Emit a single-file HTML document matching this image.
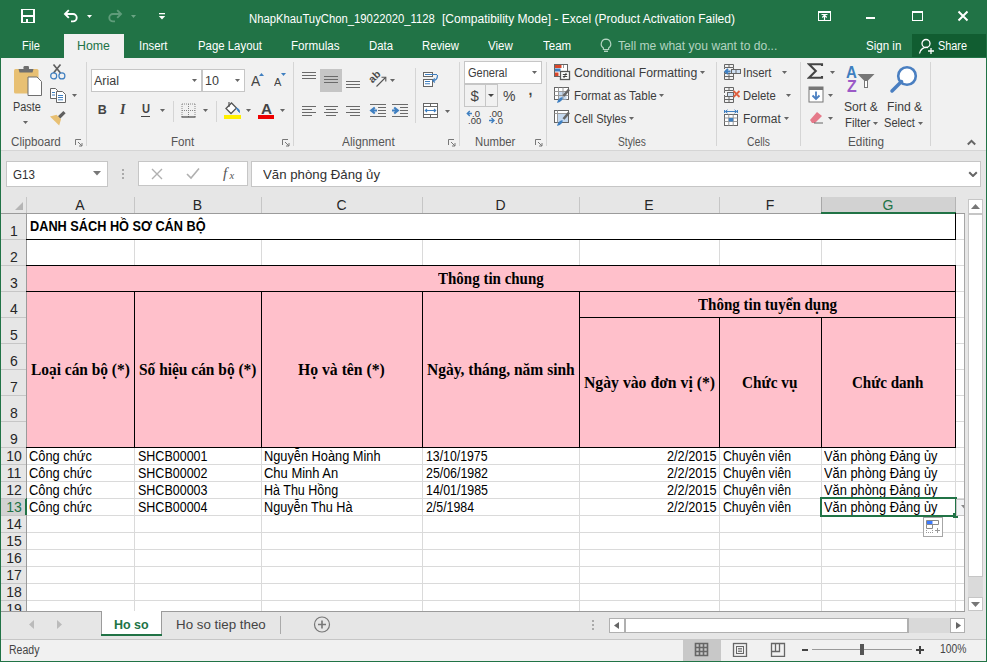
<!DOCTYPE html><html><head><meta charset="utf-8"><style>
html,body{margin:0;padding:0;width:987px;height:662px;overflow:hidden;background:#e6e6e6;font-family:"Liberation Sans",sans-serif}
</style></head><body>
<div style="position:absolute;left:0px;top:0px;width:987px;height:58px;background:#217346"></div>
<div style="position:absolute;left:0px;top:58px;width:987px;height:604px;background:#e6e6e6"></div>
<div style="position:absolute;left:0px;top:58px;width:987px;height:92px;background:#f1f1f1"></div>
<div style="position:absolute;left:0px;top:150px;width:987px;height:1px;background:#d5d5d5"></div>
<div style="position:absolute;left:0px;top:58px;width:1px;height:604px;background:#217346"></div>
<div style="position:absolute;left:986px;top:58px;width:1px;height:604px;background:#217346"></div>
<div style="position:absolute;left:0px;top:661px;width:987px;height:1px;background:#217346"></div>
<div style="position:absolute;left:64px;top:34px;width:60px;height:24px;background:#f1f1f1"></div>
<div style="position:absolute;left:248.90px;top:12.52px;font-size:12.5px;line-height:12.5px;color:#ffffff;font-weight:normal;font-family:'Liberation Sans', sans-serif;white-space:nowrap;transform:scaleX(0.9035);transform-origin:0 0;">NhapKhauTuyChon_19022020_1128</div>
<div style="position:absolute;left:442.00px;top:12.52px;font-size:12.5px;line-height:12.5px;color:#ffffff;font-weight:normal;font-family:'Liberation Sans', sans-serif;white-space:nowrap;transform:scaleX(0.9628);transform-origin:0 0;">[Compatibility Mode] - Excel (Product Activation Failed)</div>
<div style="position:absolute;left:21px;top:9px;width:14px;height:14px;background:#fff"></div>
<div style="position:absolute;left:23px;top:10px;width:10px;height:5px;background:#217346"></div>
<div style="position:absolute;left:23px;top:17px;width:10px;height:5px;background:#217346"></div>
<div style="position:absolute;left:26px;top:19px;width:2px;height:3px;background:#fff"></div>
<svg style="position:absolute;left:62px;top:8px" width="18" height="16" viewBox="0 0 18 16"><path d="M3.5 6 H11 A3.7 3.7 0 0 1 11 13.4 H9" fill="none" stroke="#fff" stroke-width="1.9"/><path d="M6.8 2.2 L3 6 L6.8 9.8" fill="none" stroke="#fff" stroke-width="1.9"/></svg>
<svg style="position:absolute;left:87.2px;top:14.5px" width="5" height="3"><polygon points="0,0 5,0 2.5,3" fill="#fff"/></svg>
<svg style="position:absolute;left:106px;top:8px" width="18" height="16" viewBox="0 0 18 16"><path d="M14.5 6 H7 A3.7 3.7 0 0 0 7 13.4 H9" fill="none" stroke="#5f9c7a" stroke-width="1.9"/><path d="M11.2 2.2 L15 6 L11.2 9.8" fill="none" stroke="#5f9c7a" stroke-width="1.9"/></svg>
<svg style="position:absolute;left:131.0px;top:14.5px" width="5" height="3"><polygon points="0,0 5,0 2.5,3" fill="#6aa584"/></svg>
<svg style="position:absolute;left:158px;top:12px" width="8" height="8" viewBox="0 0 8 8"><rect x="1" y="1" width="6" height="1.3" fill="#fff"/><polygon points="0.8,4 7.2,4 4,7.5" fill="#fff"/></svg>
<div style="position:absolute;left:818px;top:11px;width:13px;height:10px;border:1px solid #fff;border-top-width:2px;box-sizing:border-box"></div>
<svg style="position:absolute;left:818px;top:11px" width="13" height="10" viewBox="0 0 13 10"><path d="M6.5 9 V4.5 M4.3 6.5 L6.5 4.2 L8.7 6.5" fill="none" stroke="#fff" stroke-width="1.2"/><path d="M3.5 3.5 H9.5" stroke="#fff"/></svg>
<div style="position:absolute;left:866px;top:17px;width:9px;height:2px;background:#fff"></div>
<div style="position:absolute;left:912px;top:11px;width:11px;height:10px;border:1px solid #fff;border-top-width:2px;box-sizing:border-box"></div>
<svg style="position:absolute;left:957px;top:10px" width="12" height="12" viewBox="0 0 12 12"><path d="M1.5 1.5 L10.5 10.5 M10.5 1.5 L1.5 10.5" stroke="#fff" stroke-width="2"/></svg>
<div style="position:absolute;left:21.50px;top:39.72px;font-size:12.5px;line-height:12.5px;color:#ffffff;font-weight:normal;font-family:'Liberation Sans', sans-serif;white-space:nowrap;transform:scaleX(0.8845);transform-origin:0 0;">File</div>
<div style="position:absolute;left:77.20px;top:39.72px;font-size:12.5px;line-height:12.5px;color:#217346;font-weight:normal;font-family:'Liberation Sans', sans-serif;white-space:nowrap;transform:scaleX(0.9858);transform-origin:0 0;">Home</div>
<div style="position:absolute;left:139.20px;top:39.72px;font-size:12.5px;line-height:12.5px;color:#ffffff;font-weight:normal;font-family:'Liberation Sans', sans-serif;white-space:nowrap;transform:scaleX(0.9088);transform-origin:0 0;">Insert</div>
<div style="position:absolute;left:197.50px;top:39.72px;font-size:12.5px;line-height:12.5px;color:#ffffff;font-weight:normal;font-family:'Liberation Sans', sans-serif;white-space:nowrap;transform:scaleX(0.9118);transform-origin:0 0;">Page Layout</div>
<div style="position:absolute;left:291.00px;top:39.72px;font-size:12.5px;line-height:12.5px;color:#ffffff;font-weight:normal;font-family:'Liberation Sans', sans-serif;white-space:nowrap;transform:scaleX(0.9324);transform-origin:0 0;">Formulas</div>
<div style="position:absolute;left:369.00px;top:39.72px;font-size:12.5px;line-height:12.5px;color:#ffffff;font-weight:normal;font-family:'Liberation Sans', sans-serif;white-space:nowrap;transform:scaleX(0.9078);transform-origin:0 0;">Data</div>
<div style="position:absolute;left:422.00px;top:39.72px;font-size:12.5px;line-height:12.5px;color:#ffffff;font-weight:normal;font-family:'Liberation Sans', sans-serif;white-space:nowrap;transform:scaleX(0.9024);transform-origin:0 0;">Review</div>
<div style="position:absolute;left:487.70px;top:39.72px;font-size:12.5px;line-height:12.5px;color:#ffffff;font-weight:normal;font-family:'Liberation Sans', sans-serif;white-space:nowrap;transform:scaleX(0.9191);transform-origin:0 0;">View</div>
<div style="position:absolute;left:542.70px;top:39.72px;font-size:12.5px;line-height:12.5px;color:#ffffff;font-weight:normal;font-family:'Liberation Sans', sans-serif;white-space:nowrap;transform:scaleX(0.9227);transform-origin:0 0;">Team</div>
<svg style="position:absolute;left:599px;top:38px" width="14" height="15" viewBox="0 0 14 15"><path d="M7 1.2 A4.8 4.8 0 0 1 9.6 10 V11.5 H4.4 V10 A4.8 4.8 0 0 1 7 1.2 Z" fill="none" stroke="#b3d4c1" stroke-width="1.2"/><path d="M5 13.3 H9" stroke="#b3d4c1" stroke-width="1.4"/></svg>
<div style="position:absolute;left:617.60px;top:39.72px;font-size:12.5px;line-height:12.5px;color:#b3d4c1;font-weight:normal;font-family:'Liberation Sans', sans-serif;white-space:nowrap;transform:scaleX(0.9673);transform-origin:0 0;">Tell me what you want to do...</div>
<div style="position:absolute;left:866.00px;top:40.22px;font-size:12.5px;line-height:12.5px;color:#ffffff;font-weight:normal;font-family:'Liberation Sans', sans-serif;white-space:nowrap;transform:scaleX(0.9255);transform-origin:0 0;">Sign in</div>
<div style="position:absolute;left:912px;top:34px;width:74px;height:23px;background:#115d31"></div>
<svg style="position:absolute;left:918px;top:38px" width="18" height="17" viewBox="0 0 18 17"><circle cx="8" cy="5.5" r="4" fill="none" stroke="#fff" stroke-width="1.3"/><path d="M1.5 15.5 A7 7 0 0 1 10 9.5" fill="none" stroke="#fff" stroke-width="1.3"/><path d="M13 10 V16 M10 13 H16" stroke="#fff" stroke-width="1.3"/></svg>
<div style="position:absolute;left:938.00px;top:40.22px;font-size:12.5px;line-height:12.5px;color:#ffffff;font-weight:normal;font-family:'Liberation Sans', sans-serif;white-space:nowrap;transform:scaleX(0.8689);transform-origin:0 0;">Share</div>
<div style="position:absolute;left:86px;top:62px;width:1px;height:84px;background:#d5d5d5"></div>
<div style="position:absolute;left:293px;top:62px;width:1px;height:84px;background:#d5d5d5"></div>
<div style="position:absolute;left:459px;top:62px;width:1px;height:84px;background:#d5d5d5"></div>
<div style="position:absolute;left:546px;top:62px;width:1px;height:84px;background:#d5d5d5"></div>
<div style="position:absolute;left:716px;top:62px;width:1px;height:84px;background:#d5d5d5"></div>
<div style="position:absolute;left:800px;top:62px;width:1px;height:84px;background:#d5d5d5"></div>
<div style="position:absolute;left:930px;top:62px;width:1px;height:84px;background:#d5d5d5"></div>
<div style="position:absolute;left:173px;top:101px;width:1px;height:21px;background:#d5d5d5"></div>
<div style="position:absolute;left:216px;top:101px;width:1px;height:21px;background:#d5d5d5"></div>
<div style="position:absolute;left:415px;top:68px;width:1px;height:55px;background:#d5d5d5"></div>
<div style="position:absolute;left:10.70px;top:135.74px;font-size:12px;line-height:12px;color:#555;font-weight:normal;font-family:'Liberation Sans', sans-serif;white-space:nowrap;transform:scaleX(0.9677);transform-origin:0 0;">Clipboard</div>
<div style="position:absolute;left:170.70px;top:135.74px;font-size:12px;line-height:12px;color:#555;font-weight:normal;font-family:'Liberation Sans', sans-serif;white-space:nowrap;transform:scaleX(0.9667);transform-origin:0 0;">Font</div>
<div style="position:absolute;left:342.00px;top:135.74px;font-size:12px;line-height:12px;color:#555;font-weight:normal;font-family:'Liberation Sans', sans-serif;white-space:nowrap;transform:scaleX(0.9880);transform-origin:0 0;">Alignment</div>
<div style="position:absolute;left:474.70px;top:135.74px;font-size:12px;line-height:12px;color:#555;font-weight:normal;font-family:'Liberation Sans', sans-serif;white-space:nowrap;transform:scaleX(0.9447);transform-origin:0 0;">Number</div>
<div style="position:absolute;left:617.60px;top:135.74px;font-size:12px;line-height:12px;color:#555;font-weight:normal;font-family:'Liberation Sans', sans-serif;white-space:nowrap;transform:scaleX(0.8502);transform-origin:0 0;">Styles</div>
<div style="position:absolute;left:746.60px;top:135.74px;font-size:12px;line-height:12px;color:#555;font-weight:normal;font-family:'Liberation Sans', sans-serif;white-space:nowrap;transform:scaleX(0.8614);transform-origin:0 0;">Cells</div>
<div style="position:absolute;left:847.50px;top:135.74px;font-size:12px;line-height:12px;color:#555;font-weight:normal;font-family:'Liberation Sans', sans-serif;white-space:nowrap;transform:scaleX(0.9804);transform-origin:0 0;">Editing</div>
<svg style="position:absolute;left:75px;top:139px" width="8" height="8" viewBox="0 0 8 8"><path d="M0.5 6 V0.5 H6" fill="none" stroke="#777"/><path d="M3 3 L7 7 M7 4 V7 H4" fill="none" stroke="#777"/></svg>
<svg style="position:absolute;left:282px;top:139px" width="8" height="8" viewBox="0 0 8 8"><path d="M0.5 6 V0.5 H6" fill="none" stroke="#777"/><path d="M3 3 L7 7 M7 4 V7 H4" fill="none" stroke="#777"/></svg>
<svg style="position:absolute;left:448px;top:139px" width="8" height="8" viewBox="0 0 8 8"><path d="M0.5 6 V0.5 H6" fill="none" stroke="#777"/><path d="M3 3 L7 7 M7 4 V7 H4" fill="none" stroke="#777"/></svg>
<svg style="position:absolute;left:535px;top:139px" width="8" height="8" viewBox="0 0 8 8"><path d="M0.5 6 V0.5 H6" fill="none" stroke="#777"/><path d="M3 3 L7 7 M7 4 V7 H4" fill="none" stroke="#777"/></svg>
<svg style="position:absolute;left:966px;top:139px" width="11" height="7" viewBox="0 0 11 7"><path d="M1.8 5.5 L5.5 1.8 L9.2 5.5" fill="none" stroke="#666" stroke-width="2"/></svg>
<div style="position:absolute;left:12.50px;top:100.92px;font-size:12.5px;line-height:12.5px;color:#3c3c3c;font-weight:normal;font-family:'Liberation Sans', sans-serif;white-space:nowrap;transform:scaleX(0.8705);transform-origin:0 0;">Paste</div>
<svg style="position:absolute;left:23.0px;top:120.5px" width="5" height="3"><polygon points="0,0 5,0 2.5,3" fill="#666"/></svg>
<svg style="position:absolute;left:13px;top:65px" width="30" height="32" viewBox="0 0 30 32"><rect x="1" y="4" width="24.5" height="24.5" rx="1.5" fill="#e8c073"/><path d="M5.5 4 H20.5 L19.5 7.5 H6.5 Z" fill="#6f6f6f"/><rect x="10.5" y="1" width="5.5" height="4" rx="1.2" fill="#6f6f6f"/><path d="M15 12 H24 L28.5 16.5 V30.5 H15 Z" fill="#fff" stroke="#6f6f6f" stroke-width="1"/></svg>
<svg style="position:absolute;left:48px;top:62px" width="18" height="18" viewBox="0 0 18 18"><path d="M5.5 2.5 L12.5 11 M12.5 2.5 L5.5 11" stroke="#5f5f5f" stroke-width="1.7"/><circle cx="5.7" cy="13.9" r="3" fill="none" stroke="#3f7fc0" stroke-width="1.2"/><circle cx="13.9" cy="13.9" r="3" fill="none" stroke="#3f7fc0" stroke-width="1.2"/></svg>
<svg style="position:absolute;left:49px;top:87px" width="18" height="16" viewBox="0 0 18 16"><path d="M1.5 1.5 H6.5 L8.5 3.5 V11.5 H1.5 Z" fill="#fff" stroke="#666"/><path d="M3 5.5 H6 M3 8 H6" stroke="#3f7fc0"/><path d="M7.5 4.5 H13.5 L16.5 7.5 V15.5 H7.5 Z" fill="#fff" stroke="#666"/><path d="M9 8.5 H14 M9 10.5 H14 M9 12.8 H14" stroke="#3f7fc0"/></svg>
<svg style="position:absolute;left:72.0px;top:94.0px" width="5" height="3"><polygon points="0,0 5,0 2.5,3" fill="#666"/></svg>
<svg style="position:absolute;left:49px;top:110px" width="18" height="16" viewBox="0 0 18 16"><path d="M10 7.5 L15.5 2.2" stroke="#5f5f5f" stroke-width="3.2"/><path d="M1 6.5 L7.5 4.8 L12 9.3 L10.2 15.5 Z" fill="#e8c073"/></svg>
<div style="position:absolute;left:91px;top:69px;width:111px;height:23px;background:#fff;border:1px solid #c6c6c6;box-sizing:border-box"></div>
<div style="position:absolute;left:202px;top:69px;width:43px;height:23px;background:#fff;border:1px solid #c6c6c6;box-sizing:border-box"></div>
<div style="position:absolute;left:94.00px;top:74.62px;font-size:12.5px;line-height:12.5px;color:#3c3c3c;font-weight:normal;font-family:'Liberation Sans', sans-serif;white-space:nowrap;">Arial</div>
<svg style="position:absolute;left:192.0px;top:79.0px" width="5" height="3"><polygon points="0,0 5,0 2.5,3" fill="#666"/></svg>
<div style="position:absolute;left:205.00px;top:74.62px;font-size:12.5px;line-height:12.5px;color:#3c3c3c;font-weight:normal;font-family:'Liberation Sans', sans-serif;white-space:nowrap;">10</div>
<svg style="position:absolute;left:235.0px;top:79.0px" width="5" height="3"><polygon points="0,0 5,0 2.5,3" fill="#666"/></svg>
<div style="position:absolute;left:251.10px;top:74.15px;font-size:14px;line-height:14px;color:#444;font-weight:normal;font-family:'Liberation Sans', sans-serif;white-space:nowrap;transform:scaleX(0.9915);transform-origin:0 0;">A</div>
<svg style="position:absolute;left:259px;top:73px" width="5" height="3" viewBox="0 0 5 3"><polygon points="0,3 2.5,0 5,3" fill="#3f7fc0"/></svg>
<div style="position:absolute;left:274.20px;top:76.69px;font-size:11px;line-height:11px;color:#444;font-weight:normal;font-family:'Liberation Sans', sans-serif;white-space:nowrap;transform:scaleX(1.0041);transform-origin:0 0;">A</div>
<svg style="position:absolute;left:281px;top:73px" width="5" height="3" viewBox="0 0 5 3"><polygon points="0,0 5,0 2.5,3" fill="#3f7fc0"/></svg>
<div style="position:absolute;left:97.70px;top:103.92px;font-size:12.5px;line-height:12.5px;color:#444;font-weight:bold;font-family:'Liberation Sans', sans-serif;white-space:nowrap;">B</div>
<div style="position:absolute;left:120.00px;top:102.78px;font-size:14px;line-height:14px;color:#444;font-weight:bold;font-family:'Liberation Serif', serif;white-space:nowrap;"><i>I</i></div>
<div style="position:absolute;left:141.50px;top:103.42px;font-size:12.5px;line-height:12.5px;color:#444;font-weight:bold;font-family:'Liberation Sans', sans-serif;white-space:nowrap;transform:scaleX(0.8889);transform-origin:0 0;">U</div>
<div style="position:absolute;left:141px;top:116px;width:9px;height:1px;background:#444"></div>
<svg style="position:absolute;left:160.1px;top:109.0px" width="5" height="3"><polygon points="0,0 5,0 2.5,3" fill="#666"/></svg>
<svg style="position:absolute;left:181px;top:103px" width="15" height="15" viewBox="0 0 15 15"><path d="M1 1 H14 M1 7.5 H14 M1 1 V14 M7.5 1 V14 M14 1 V14" stroke="#888" stroke-dasharray="1 1"/><path d="M0.5 14 H14.5" stroke="#444" stroke-width="1.2"/></svg>
<svg style="position:absolute;left:203.1px;top:109.0px" width="5" height="3"><polygon points="0,0 5,0 2.5,3" fill="#666"/></svg>
<svg style="position:absolute;left:223px;top:101px" width="19" height="14" viewBox="0 0 19 14"><path d="M3 7.5 L8.5 2 L13.5 7 L8 12.5 Z" fill="#fff" stroke="#555" stroke-width="1.3"/><path d="M6 1 V6" stroke="#555" stroke-width="1.2"/><path d="M13.5 7 Q17 8 16.5 11.5 Q14.5 10 13.5 7 Z" fill="#3f7fc0" stroke="#3f7fc0" stroke-width="1"/></svg>
<div style="position:absolute;left:224px;top:115px;width:17px;height:4px;background:#ffef00"></div>
<svg style="position:absolute;left:246.3px;top:109.0px" width="5" height="3"><polygon points="0,0 5,0 2.5,3" fill="#666"/></svg>
<div style="position:absolute;left:261.00px;top:102.15px;font-size:14px;line-height:14px;color:#444;font-weight:bold;font-family:'Liberation Sans', sans-serif;white-space:nowrap;transform:scaleX(1.0913);transform-origin:0 0;">A</div>
<div style="position:absolute;left:258px;top:115px;width:16px;height:4px;background:#e00"></div>
<svg style="position:absolute;left:280.3px;top:109.0px" width="5" height="3"><polygon points="0,0 5,0 2.5,3" fill="#666"/></svg>
<div style="position:absolute;left:302px;top:72px;width:14px;height:1px;background:#6a6a6a"></div>
<div style="position:absolute;left:302px;top:75px;width:14px;height:1px;background:#6a6a6a"></div>
<div style="position:absolute;left:302px;top:78px;width:14px;height:1px;background:#6a6a6a"></div>
<div style="position:absolute;left:320px;top:69px;width:22px;height:23px;background:#c5c5c5"></div>
<div style="position:absolute;left:324px;top:76px;width:14px;height:1px;background:#6a6a6a"></div>
<div style="position:absolute;left:324px;top:79px;width:14px;height:1px;background:#6a6a6a"></div>
<div style="position:absolute;left:324px;top:82px;width:14px;height:1px;background:#6a6a6a"></div>
<div style="position:absolute;left:346px;top:81px;width:14px;height:1px;background:#6a6a6a"></div>
<div style="position:absolute;left:346px;top:84px;width:14px;height:1px;background:#6a6a6a"></div>
<div style="position:absolute;left:346px;top:87px;width:14px;height:1px;background:#6a6a6a"></div>
<svg style="position:absolute;left:368px;top:70px" width="20" height="18" viewBox="0 0 20 18"><text x="0" y="0" font-family="Liberation Sans" font-size="10.5" font-weight="bold" fill="#4a4a4a" transform="translate(4.5 13.5) rotate(-45)">ab</text><path d="M8.5 16.5 L17.5 7.5" stroke="#555" stroke-width="1.1"/><path d="M13.5 7.2 H17.8 V11.5" fill="none" stroke="#555" stroke-width="1.1"/></svg>
<svg style="position:absolute;left:389.9px;top:79.0px" width="5" height="3"><polygon points="0,0 5,0 2.5,3" fill="#666"/></svg>
<svg style="position:absolute;left:422px;top:71px" width="18" height="17" viewBox="0 0 18 17"><rect x="1.5" y="1.5" width="9" height="4" fill="#fff" stroke="#666"/><rect x="1.5" y="8.5" width="9" height="7" fill="#fff" stroke="#666"/><path d="M3 3.5 H15 M3 10.5 H8 M3 12.8 H8" stroke="#3f7fc0" stroke-width="1.1"/><path d="M15.5 4 Q15.5 9.5 11 9.5" fill="none" stroke="#3f7fc0" stroke-width="1.2"/><path d="M12.8 7.5 L10.8 9.5 L12.8 11.5" fill="none" stroke="#3f7fc0" stroke-width="1.2"/></svg>
<div style="position:absolute;left:302px;top:106px;width:14px;height:1px;background:#6a6a6a"></div>
<div style="position:absolute;left:302px;top:109px;width:10px;height:1px;background:#6a6a6a"></div>
<div style="position:absolute;left:302px;top:112px;width:14px;height:1px;background:#6a6a6a"></div>
<div style="position:absolute;left:302px;top:115px;width:10px;height:1px;background:#6a6a6a"></div>
<div style="position:absolute;left:324px;top:106px;width:14px;height:1px;background:#6a6a6a"></div>
<div style="position:absolute;left:326px;top:109px;width:10px;height:1px;background:#6a6a6a"></div>
<div style="position:absolute;left:324px;top:112px;width:14px;height:1px;background:#6a6a6a"></div>
<div style="position:absolute;left:326px;top:115px;width:10px;height:1px;background:#6a6a6a"></div>
<div style="position:absolute;left:346px;top:106px;width:14px;height:1px;background:#6a6a6a"></div>
<div style="position:absolute;left:350px;top:109px;width:10px;height:1px;background:#6a6a6a"></div>
<div style="position:absolute;left:346px;top:112px;width:14px;height:1px;background:#6a6a6a"></div>
<div style="position:absolute;left:350px;top:115px;width:10px;height:1px;background:#6a6a6a"></div>
<div style="position:absolute;left:370px;top:104px;width:16px;height:1px;background:#6a6a6a"></div>
<div style="position:absolute;left:370px;top:116px;width:16px;height:1px;background:#6a6a6a"></div>
<div style="position:absolute;left:378px;top:107px;width:8px;height:1px;background:#6a6a6a"></div>
<div style="position:absolute;left:378px;top:110px;width:8px;height:1px;background:#6a6a6a"></div>
<div style="position:absolute;left:378px;top:113px;width:8px;height:1px;background:#6a6a6a"></div>
<div style="position:absolute;left:392px;top:104px;width:16px;height:1px;background:#6a6a6a"></div>
<div style="position:absolute;left:392px;top:116px;width:16px;height:1px;background:#6a6a6a"></div>
<div style="position:absolute;left:400px;top:107px;width:8px;height:1px;background:#6a6a6a"></div>
<div style="position:absolute;left:400px;top:110px;width:8px;height:1px;background:#6a6a6a"></div>
<div style="position:absolute;left:400px;top:113px;width:8px;height:1px;background:#6a6a6a"></div>
<svg style="position:absolute;left:369px;top:102px" width="10" height="16" viewBox="0 0 10 16"><path d="M8 8.5 H3 M5.8 5.5 L2.2 8.5 L5.8 11.5" fill="none" stroke="#3f7fc0" stroke-width="2.2"/></svg>
<svg style="position:absolute;left:391px;top:102px" width="10" height="16" viewBox="0 0 10 16"><path d="M1 8.5 H6 M3.2 5.5 L6.8 8.5 L3.2 11.5" fill="none" stroke="#3f7fc0" stroke-width="2.2"/></svg>
<svg style="position:absolute;left:422px;top:102px" width="17" height="17" viewBox="0 0 17 17"><rect x="1.5" y="1.5" width="14" height="14" fill="#fff" stroke="#666"/><path d="M1.5 4.5 H15.5 M1.5 12.5 H15.5 M8.5 1.5 V4.5 M8.5 12.5 V15.5" stroke="#666"/><path d="M3.5 8.5 H13.5" stroke="#3f7fc0"/><path d="M5 7 L3.3 8.5 L5 10 M12 7 L13.7 8.5 L12 10" fill="none" stroke="#3f7fc0" stroke-width="1.1"/></svg>
<svg style="position:absolute;left:444.9px;top:109.5px" width="5" height="3"><polygon points="0,0 5,0 2.5,3" fill="#666"/></svg>
<div style="position:absolute;left:464px;top:61px;width:78px;height:23px;background:#fff;border:1px solid #c6c6c6;box-sizing:border-box"></div>
<div style="position:absolute;left:467.50px;top:67.22px;font-size:12.5px;line-height:12.5px;color:#3c3c3c;font-weight:normal;font-family:'Liberation Sans', sans-serif;white-space:nowrap;transform:scaleX(0.8809);transform-origin:0 0;">General</div>
<svg style="position:absolute;left:531.9px;top:71.0px" width="5" height="3"><polygon points="0,0 5,0 2.5,3" fill="#666"/></svg>
<div style="position:absolute;left:464px;top:84px;width:34px;height:23px;border:1px solid #c6c6c6;box-sizing:border-box"></div>
<div style="position:absolute;left:485px;top:85px;width:1px;height:21px;background:#c6c6c6"></div>
<div style="position:absolute;left:470.50px;top:87.80px;font-size:15px;line-height:15px;color:#444;font-weight:normal;font-family:'Liberation Sans', sans-serif;white-space:nowrap;">$</div>
<svg style="position:absolute;left:488.4px;top:94.0px" width="6" height="3"><polygon points="0,0 6,0 3.0,3" fill="#444"/></svg>
<div style="position:absolute;left:503.30px;top:88.65px;font-size:14px;line-height:14px;color:#444;font-weight:normal;font-family:'Liberation Sans', sans-serif;white-space:nowrap;transform:scaleX(1.0032);transform-origin:0 0;">%</div>
<div style="position:absolute;left:528.50px;top:83.15px;font-size:14px;line-height:14px;color:#444;font-weight:bold;font-family:'Liberation Sans', sans-serif;white-space:nowrap;">,</div>
<svg style="position:absolute;left:466px;top:109px" width="17" height="17" viewBox="0 0 17 17"><path d="M1.5 4.5 H6 M3.8 2 L1.3 4.5 L3.8 7" fill="none" stroke="#3f7fc0" stroke-width="1.4"/><text x="6" y="8" font-family="Liberation Sans" font-size="9.5" fill="#3a3a3a">.0</text><text x="2" y="15" font-family="Liberation Sans" font-size="9.5" fill="#3a3a3a">.00</text></svg>
<svg style="position:absolute;left:488px;top:109px" width="17" height="17" viewBox="0 0 17 17"><text x="1" y="8" font-family="Liberation Sans" font-size="9.5" fill="#3a3a3a">.00</text><path d="M1 11.5 H6 M3.5 9 L6 11.5 L3.5 14" fill="none" stroke="#3f7fc0" stroke-width="1.4"/><text x="7" y="15" font-family="Liberation Sans" font-size="9.5" fill="#3a3a3a">.0</text></svg>
<svg style="position:absolute;left:553px;top:63px" width="18" height="18" viewBox="0 0 18 18"><rect x="1.5" y="1.5" width="13" height="12" fill="#fff" stroke="#666"/><rect x="2" y="2" width="6.5" height="3" fill="#d9472b"/><rect x="2" y="5.5" width="5.5" height="3" fill="#3f7fc0"/><rect x="2" y="9.5" width="3.5" height="3.5" fill="#d9472b"/><path d="M10.5 2 V5" stroke="#999"/><rect x="7.5" y="8.5" width="9" height="8" fill="#fff" stroke="#555" stroke-width="1.3"/><path d="M9.8 11.5 H14.2 M9.8 13.5 H14.2 M13.2 10 L10.8 15" stroke="#333" stroke-width="0.9"/></svg>
<div style="position:absolute;left:573.50px;top:67.22px;font-size:12.5px;line-height:12.5px;color:#3c3c3c;font-weight:normal;font-family:'Liberation Sans', sans-serif;white-space:nowrap;transform:scaleX(0.9797);transform-origin:0 0;">Conditional Formatting</div>
<svg style="position:absolute;left:699.8px;top:71.1px" width="5" height="3"><polygon points="0,0 5,0 2.5,3" fill="#666"/></svg>
<svg style="position:absolute;left:553px;top:86px" width="18" height="18" viewBox="0 0 18 18"><rect x="1.5" y="1.5" width="14" height="12" fill="#fff" stroke="#666"/><rect x="5.5" y="5.5" width="8" height="8" fill="#c5d9ef"/><path d="M1.5 5.5 H15.5 M1.5 9.5 H15.5 M5.5 1.5 V13.5 M10 1.5 V13.5" stroke="#999"/><path d="M16 3.5 L10.5 10" stroke="#666" stroke-width="2.6"/><path d="M4 17 Q5 12 9.5 11 Q10.5 15 4 17 Z" fill="#3f7fc0"/></svg>
<div style="position:absolute;left:573.50px;top:90.22px;font-size:12.5px;line-height:12.5px;color:#3c3c3c;font-weight:normal;font-family:'Liberation Sans', sans-serif;white-space:nowrap;transform:scaleX(0.9253);transform-origin:0 0;">Format as Table</div>
<svg style="position:absolute;left:658.7px;top:94.3px" width="5" height="3"><polygon points="0,0 5,0 2.5,3" fill="#666"/></svg>
<svg style="position:absolute;left:553px;top:109px" width="18" height="18" viewBox="0 0 18 18"><rect x="1.5" y="1.5" width="14" height="12" fill="#fff" stroke="#666"/><rect x="5" y="5" width="10" height="8" fill="#c5d9ef"/><path d="M1.5 4.5 H15.5 M4.5 1.5 V13.5" stroke="#999"/><path d="M16 3.5 L10.5 10" stroke="#666" stroke-width="2.6"/><path d="M4 17 Q5 12 9.5 11 Q10.5 15 4 17 Z" fill="#3f7fc0"/></svg>
<div style="position:absolute;left:573.50px;top:113.22px;font-size:12.5px;line-height:12.5px;color:#3c3c3c;font-weight:normal;font-family:'Liberation Sans', sans-serif;white-space:nowrap;transform:scaleX(0.8855);transform-origin:0 0;">Cell Styles</div>
<svg style="position:absolute;left:628.6px;top:117.3px" width="5" height="3"><polygon points="0,0 5,0 2.5,3" fill="#666"/></svg>
<svg style="position:absolute;left:723px;top:63px" width="18" height="18" viewBox="0 0 18 18"><path d="M1.5 1.5 H10.5 V4.5 H1.5 Z M6 1.5 V4.5 M1.5 10.5 H10.5 V16.5 H1.5 Z M1.5 13.5 H10.5 M6 10.5 V16.5 M1.5 4.5 V6 M10.5 4.5 V6 M1.5 9 V10.5 M8.5 10.5 V9.5" fill="none" stroke="#666"/><rect x="8.5" y="6.5" width="9" height="4" fill="#cfe0f3" stroke="#666"/><path d="M13 6.5 V10.5" stroke="#666"/><path d="M7.5 8.5 H2.5 M5 5.8 L2.2 8.5 L5 11.2" fill="none" stroke="#3f7fc0" stroke-width="1.8"/></svg>
<div style="position:absolute;left:743.30px;top:67.02px;font-size:12.5px;line-height:12.5px;color:#3c3c3c;font-weight:normal;font-family:'Liberation Sans', sans-serif;white-space:nowrap;transform:scaleX(0.9088);transform-origin:0 0;">Insert</div>
<svg style="position:absolute;left:782.0px;top:71.1px" width="5" height="3"><polygon points="0,0 5,0 2.5,3" fill="#666"/></svg>
<svg style="position:absolute;left:723px;top:86px" width="18" height="18" viewBox="0 0 18 18"><path d="M1.5 1.5 H10.5 V4.5 H1.5 Z M6 1.5 V4.5 M1.5 10.5 H10.5 V16.5 H1.5 Z M1.5 13.5 H10.5 M6 10.5 V16.5 M1.5 4.5 V7 M1.5 9 V10.5" fill="none" stroke="#666"/><rect x="4.5" y="6.5" width="6" height="4" fill="#cfe0f3" stroke="#666"/><path d="M10.5 5 L16.5 11 M16.5 5 L10.5 11" stroke="#e0603f" stroke-width="1.8"/></svg>
<div style="position:absolute;left:743.30px;top:90.42px;font-size:12.5px;line-height:12.5px;color:#3c3c3c;font-weight:normal;font-family:'Liberation Sans', sans-serif;white-space:nowrap;transform:scaleX(0.9052);transform-origin:0 0;">Delete</div>
<svg style="position:absolute;left:785.5px;top:94.1px" width="5" height="3"><polygon points="0,0 5,0 2.5,3" fill="#666"/></svg>
<svg style="position:absolute;left:723px;top:109px" width="17" height="18" viewBox="0 0 17 18"><path d="M1.5 1 V4 M14.5 1 V4 M2.5 2.5 H13.5" stroke="#3f7fc0"/><path d="M4.5 0.8 L2.2 2.5 L4.5 4.2 M11.5 0.8 L13.8 2.5 L11.5 4.2" fill="none" stroke="#3f7fc0"/><rect x="1.5" y="5.5" width="13" height="11" fill="#fff" stroke="#666"/><path d="M1.5 9 H14.5 M1.5 12.5 H14.5 M5.8 5.5 V16.5 M10.2 5.5 V16.5" stroke="#999"/><rect x="5.8" y="9" width="4.4" height="3.5" fill="#3f7fc0"/></svg>
<div style="position:absolute;left:743.30px;top:113.42px;font-size:12.5px;line-height:12.5px;color:#3c3c3c;font-weight:normal;font-family:'Liberation Sans', sans-serif;white-space:nowrap;transform:scaleX(0.9529);transform-origin:0 0;">Format</div>
<svg style="position:absolute;left:784.1px;top:117.2px" width="5" height="3"><polygon points="0,0 5,0 2.5,3" fill="#666"/></svg>
<svg style="position:absolute;left:807px;top:63px" width="17" height="17" viewBox="0 0 17 17"><path d="M15 3 V1.2 H2 L8.8 8 L2 14.8 H15 V13" fill="none" stroke="#444" stroke-width="2.1"/></svg>
<svg style="position:absolute;left:829.8px;top:71.0px" width="5" height="3"><polygon points="0,0 5,0 2.5,3" fill="#666"/></svg>
<svg style="position:absolute;left:808px;top:86px" width="16" height="18" viewBox="0 0 16 18"><rect x="1" y="1" width="14" height="15" fill="#fff" stroke="#777"/><rect x="1" y="1" width="14" height="3" fill="#777"/><path d="M8 5.5 V13 M4.5 9.5 L8 13 L11.5 9.5" fill="none" stroke="#4a7fc1" stroke-width="1.8"/></svg>
<svg style="position:absolute;left:828.1px;top:94.0px" width="5" height="3"><polygon points="0,0 5,0 2.5,3" fill="#666"/></svg>
<svg style="position:absolute;left:808px;top:110px" width="16" height="15" viewBox="0 0 16 15"><path d="M2 10 L9 2 L14 6 L7 13 H4 Z" fill="#e57a8a"/><path d="M6 13 H15" stroke="#666"/></svg>
<svg style="position:absolute;left:828.1px;top:116.5px" width="5" height="3"><polygon points="0,0 5,0 2.5,3" fill="#666"/></svg>
<div style="position:absolute;left:846.30px;top:65.06px;font-size:16px;line-height:16px;color:#3f7fc0;font-weight:bold;font-family:'Liberation Sans', sans-serif;white-space:nowrap;transform:scaleX(0.9375);transform-origin:0 0;">A</div>
<div style="position:absolute;left:846.80px;top:78.96px;font-size:16px;line-height:16px;color:#9b59c6;font-weight:bold;font-family:'Liberation Sans', sans-serif;white-space:nowrap;transform:scaleX(0.9939);transform-origin:0 0;">Z</div>
<svg style="position:absolute;left:857px;top:73px" width="18" height="16" viewBox="0 0 18 16"><path d="M0.5 1 H17.5 L11 7.5 V15 H7 V7.5 Z" fill="#777"/><path d="M8 8 V14 H10 V8" fill="#fff"/></svg>
<svg style="position:absolute;left:888px;top:64px" width="30" height="30" viewBox="0 0 30 30"><circle cx="19" cy="12" r="8.8" fill="#fff" stroke="#4a7fc1" stroke-width="2.6"/><path d="M13.5 17.5 L4 27" stroke="#4a7fc1" stroke-width="3.5" stroke-linecap="round"/></svg>
<div style="position:absolute;left:844.20px;top:101.32px;font-size:12.5px;line-height:12.5px;color:#3c3c3c;font-weight:normal;font-family:'Liberation Sans', sans-serif;white-space:nowrap;transform:scaleX(0.9727);transform-origin:0 0;">Sort &amp;</div>
<div style="position:absolute;left:844.50px;top:117.32px;font-size:12.5px;line-height:12.5px;color:#3c3c3c;font-weight:normal;font-family:'Liberation Sans', sans-serif;white-space:nowrap;transform:scaleX(0.9117);transform-origin:0 0;">Filter</div>
<svg style="position:absolute;left:873.3px;top:121.5px" width="5" height="3"><polygon points="0,0 5,0 2.5,3" fill="#666"/></svg>
<div style="position:absolute;left:886.50px;top:101.32px;font-size:12.5px;line-height:12.5px;color:#3c3c3c;font-weight:normal;font-family:'Liberation Sans', sans-serif;white-space:nowrap;transform:scaleX(0.9744);transform-origin:0 0;">Find &amp;</div>
<div style="position:absolute;left:884.40px;top:117.32px;font-size:12.5px;line-height:12.5px;color:#3c3c3c;font-weight:normal;font-family:'Liberation Sans', sans-serif;white-space:nowrap;transform:scaleX(0.8892);transform-origin:0 0;">Select</div>
<svg style="position:absolute;left:918.3px;top:121.5px" width="5" height="3"><polygon points="0,0 5,0 2.5,3" fill="#666"/></svg>
<div style="position:absolute;left:6px;top:161px;width:102px;height:26px;background:#fff;border:1px solid #c6c6c6;box-sizing:border-box"></div>
<div style="position:absolute;left:13.40px;top:168.62px;font-size:12.5px;line-height:12.5px;color:#303030;font-weight:normal;font-family:'Liberation Sans', sans-serif;white-space:nowrap;transform:scaleX(0.9270);transform-origin:0 0;">G13</div>
<svg style="position:absolute;left:93px;top:171px" width="8" height="5"><polygon points="0,0 8,0 4,4.5" fill="#777"/></svg>
<div style="position:absolute;left:122px;top:169px;width:2px;height:2px;background:#aaa"></div>
<div style="position:absolute;left:122px;top:173px;width:2px;height:2px;background:#aaa"></div>
<div style="position:absolute;left:122px;top:177px;width:2px;height:2px;background:#aaa"></div>
<div style="position:absolute;left:138px;top:161px;width:110px;height:25px;background:#fff;border:1px solid #c6c6c6;box-sizing:border-box"></div>
<svg style="position:absolute;left:151px;top:168px" width="12" height="12" viewBox="0 0 12 12"><path d="M1 1 L11 11 M11 1 L1 11" stroke="#b0b0b0" stroke-width="1.4"/></svg>
<svg style="position:absolute;left:186px;top:167px" width="14" height="13" viewBox="0 0 14 13"><path d="M1 7 L5 11 L13 1.5" fill="none" stroke="#b0b0b0" stroke-width="1.6"/></svg>
<div style="position:absolute;left:223.00px;top:166.44px;font-size:15px;line-height:15px;color:#555;font-weight:normal;font-family:'Liberation Serif', serif;white-space:nowrap;"><i>f</i></div>
<div style="position:absolute;left:229.50px;top:171.21px;font-size:10.5px;line-height:10.5px;color:#555;font-weight:normal;font-family:'Liberation Serif', serif;white-space:nowrap;"><i>x</i></div>
<div style="position:absolute;left:251px;top:161px;width:730px;height:26px;background:#fff;border:1px solid #c6c6c6;box-sizing:border-box"></div>
<div style="position:absolute;left:263.20px;top:168.62px;font-size:12.5px;line-height:12.5px;color:#303030;font-weight:normal;font-family:'Liberation Sans', sans-serif;white-space:nowrap;transform:scaleX(1.0588);transform-origin:0 0;">Văn phòng Đảng ủy</div>
<svg style="position:absolute;left:968px;top:171px" width="10" height="6" viewBox="0 0 10 6"><path d="M1.2 1.2 L5 5 L8.8 1.2" fill="none" stroke="#666" stroke-width="2"/></svg>
<div style="position:absolute;left:1px;top:197px;width:955px;height:16px;background:#e6e6e6"></div>
<div style="position:absolute;left:1px;top:213px;width:26px;height:398px;background:#e6e6e6"></div>
<svg style="position:absolute;left:14px;top:201px" width="10" height="10" viewBox="0 0 10 10"><polygon points="9,1 9,9 1,9" fill="#b5b5b5"/></svg>
<div style="position:absolute;left:26px;top:197px;width:1px;height:16px;background:#c6c6c6"></div>
<div style="position:absolute;left:134px;top:197px;width:1px;height:16px;background:#c6c6c6"></div>
<div style="position:absolute;left:261px;top:197px;width:1px;height:16px;background:#c6c6c6"></div>
<div style="position:absolute;left:422px;top:197px;width:1px;height:16px;background:#c6c6c6"></div>
<div style="position:absolute;left:579px;top:197px;width:1px;height:16px;background:#c6c6c6"></div>
<div style="position:absolute;left:719px;top:197px;width:1px;height:16px;background:#c6c6c6"></div>
<div style="position:absolute;left:821px;top:197px;width:1px;height:16px;background:#c6c6c6"></div>
<div style="position:absolute;left:1px;top:213px;width:964px;height:1px;background:#9b9b9b"></div>
<div style="position:absolute;left:821px;top:197px;width:135px;height:15px;background:#d2d2d2"></div>
<div style="position:absolute;left:821px;top:197px;width:1px;height:15px;background:#a8a8a8"></div>
<div style="position:absolute;left:955px;top:197px;width:1px;height:15px;background:#b4b4b4"></div>
<div style="position:absolute;left:821px;top:212px;width:135px;height:2px;background:#217346"></div>
<div style="position:absolute;left:40.0px;width:80px;top:198px;height:15px;text-align:center;font:14px/15px 'Liberation Sans',sans-serif;color:#262626">A</div>
<div style="position:absolute;left:157.5px;width:80px;top:198px;height:15px;text-align:center;font:14px/15px 'Liberation Sans',sans-serif;color:#262626">B</div>
<div style="position:absolute;left:301.5px;width:80px;top:198px;height:15px;text-align:center;font:14px/15px 'Liberation Sans',sans-serif;color:#262626">C</div>
<div style="position:absolute;left:460.5px;width:80px;top:198px;height:15px;text-align:center;font:14px/15px 'Liberation Sans',sans-serif;color:#262626">D</div>
<div style="position:absolute;left:609.0px;width:80px;top:198px;height:15px;text-align:center;font:14px/15px 'Liberation Sans',sans-serif;color:#262626">E</div>
<div style="position:absolute;left:730.0px;width:80px;top:198px;height:15px;text-align:center;font:14px/15px 'Liberation Sans',sans-serif;color:#262626">F</div>
<div style="position:absolute;left:848.0px;width:80px;top:198px;height:15px;text-align:center;font:14px/15px 'Liberation Sans',sans-serif;color:#217346">G</div>
<div style="position:absolute;left:26px;top:213px;width:1px;height:398px;background:#9b9b9b"></div>
<div style="position:absolute;left:1px;top:498px;width:24px;height:17px;background:#d2d2d2"></div>
<div style="position:absolute;left:25px;top:498px;width:2px;height:17px;background:#217346"></div>
<div style="position:absolute;left:1px;top:239px;width:25px;height:1px;background:#c6c6c6"></div>
<div style="position:absolute;left:2px;width:24px;top:224px;height:15px;text-align:center;font:14px/15px 'Liberation Sans',sans-serif;color:#262626">1</div>
<div style="position:absolute;left:1px;top:265px;width:25px;height:1px;background:#c6c6c6"></div>
<div style="position:absolute;left:2px;width:24px;top:250px;height:15px;text-align:center;font:14px/15px 'Liberation Sans',sans-serif;color:#262626">2</div>
<div style="position:absolute;left:1px;top:291px;width:25px;height:1px;background:#c6c6c6"></div>
<div style="position:absolute;left:2px;width:24px;top:276px;height:15px;text-align:center;font:14px/15px 'Liberation Sans',sans-serif;color:#262626">3</div>
<div style="position:absolute;left:1px;top:317px;width:25px;height:1px;background:#c6c6c6"></div>
<div style="position:absolute;left:2px;width:24px;top:302px;height:15px;text-align:center;font:14px/15px 'Liberation Sans',sans-serif;color:#262626">4</div>
<div style="position:absolute;left:1px;top:343px;width:25px;height:1px;background:#c6c6c6"></div>
<div style="position:absolute;left:2px;width:24px;top:328px;height:15px;text-align:center;font:14px/15px 'Liberation Sans',sans-serif;color:#262626">5</div>
<div style="position:absolute;left:1px;top:369px;width:25px;height:1px;background:#c6c6c6"></div>
<div style="position:absolute;left:2px;width:24px;top:354px;height:15px;text-align:center;font:14px/15px 'Liberation Sans',sans-serif;color:#262626">6</div>
<div style="position:absolute;left:1px;top:395px;width:25px;height:1px;background:#c6c6c6"></div>
<div style="position:absolute;left:2px;width:24px;top:380px;height:15px;text-align:center;font:14px/15px 'Liberation Sans',sans-serif;color:#262626">7</div>
<div style="position:absolute;left:1px;top:421px;width:25px;height:1px;background:#c6c6c6"></div>
<div style="position:absolute;left:2px;width:24px;top:406px;height:15px;text-align:center;font:14px/15px 'Liberation Sans',sans-serif;color:#262626">8</div>
<div style="position:absolute;left:1px;top:447px;width:25px;height:1px;background:#c6c6c6"></div>
<div style="position:absolute;left:2px;width:24px;top:432px;height:15px;text-align:center;font:14px/15px 'Liberation Sans',sans-serif;color:#262626">9</div>
<div style="position:absolute;left:1px;top:464px;width:25px;height:1px;background:#c6c6c6"></div>
<div style="position:absolute;left:2px;width:24px;top:449px;height:15px;text-align:center;font:14px/15px 'Liberation Sans',sans-serif;color:#262626">10</div>
<div style="position:absolute;left:1px;top:481px;width:25px;height:1px;background:#c6c6c6"></div>
<div style="position:absolute;left:2px;width:24px;top:466px;height:15px;text-align:center;font:14px/15px 'Liberation Sans',sans-serif;color:#262626">11</div>
<div style="position:absolute;left:1px;top:498px;width:25px;height:1px;background:#c6c6c6"></div>
<div style="position:absolute;left:2px;width:24px;top:483px;height:15px;text-align:center;font:14px/15px 'Liberation Sans',sans-serif;color:#262626">12</div>
<div style="position:absolute;left:1px;top:515px;width:25px;height:1px;background:#c6c6c6"></div>
<div style="position:absolute;left:2px;width:24px;top:500px;height:15px;text-align:center;font:14px/15px 'Liberation Sans',sans-serif;color:#217346">13</div>
<div style="position:absolute;left:1px;top:532px;width:25px;height:1px;background:#c6c6c6"></div>
<div style="position:absolute;left:2px;width:24px;top:517px;height:15px;text-align:center;font:14px/15px 'Liberation Sans',sans-serif;color:#262626">14</div>
<div style="position:absolute;left:1px;top:549px;width:25px;height:1px;background:#c6c6c6"></div>
<div style="position:absolute;left:2px;width:24px;top:534px;height:15px;text-align:center;font:14px/15px 'Liberation Sans',sans-serif;color:#262626">15</div>
<div style="position:absolute;left:1px;top:566px;width:25px;height:1px;background:#c6c6c6"></div>
<div style="position:absolute;left:2px;width:24px;top:551px;height:15px;text-align:center;font:14px/15px 'Liberation Sans',sans-serif;color:#262626">16</div>
<div style="position:absolute;left:1px;top:583px;width:25px;height:1px;background:#c6c6c6"></div>
<div style="position:absolute;left:2px;width:24px;top:568px;height:15px;text-align:center;font:14px/15px 'Liberation Sans',sans-serif;color:#262626">17</div>
<div style="position:absolute;left:1px;top:600px;width:25px;height:1px;background:#c6c6c6"></div>
<div style="position:absolute;left:2px;width:24px;top:585px;height:15px;text-align:center;font:14px/15px 'Liberation Sans',sans-serif;color:#262626">18</div>
<div style="position:absolute;left:1px;top:617px;width:25px;height:1px;background:#c6c6c6"></div>
<div style="position:absolute;left:2px;width:24px;top:602px;height:15px;text-align:center;font:14px/15px 'Liberation Sans',sans-serif;color:#262626">19</div>
<div style="position:absolute;left:27px;top:214px;width:938px;height:397px;background:#fff"></div>
<div style="position:absolute;left:134px;top:214px;width:1px;height:397px;background:#dadada"></div>
<div style="position:absolute;left:261px;top:214px;width:1px;height:397px;background:#dadada"></div>
<div style="position:absolute;left:422px;top:214px;width:1px;height:397px;background:#dadada"></div>
<div style="position:absolute;left:579px;top:214px;width:1px;height:397px;background:#dadada"></div>
<div style="position:absolute;left:719px;top:214px;width:1px;height:397px;background:#dadada"></div>
<div style="position:absolute;left:821px;top:214px;width:1px;height:397px;background:#dadada"></div>
<div style="position:absolute;left:955px;top:214px;width:1px;height:397px;background:#dadada"></div>
<div style="position:absolute;left:964px;top:214px;width:1px;height:397px;background:#dadada"></div>
<div style="position:absolute;left:27px;top:239px;width:938px;height:1px;background:#dadada"></div>
<div style="position:absolute;left:27px;top:265px;width:938px;height:1px;background:#dadada"></div>
<div style="position:absolute;left:27px;top:291px;width:938px;height:1px;background:#dadada"></div>
<div style="position:absolute;left:27px;top:317px;width:938px;height:1px;background:#dadada"></div>
<div style="position:absolute;left:27px;top:343px;width:938px;height:1px;background:#dadada"></div>
<div style="position:absolute;left:27px;top:369px;width:938px;height:1px;background:#dadada"></div>
<div style="position:absolute;left:27px;top:395px;width:938px;height:1px;background:#dadada"></div>
<div style="position:absolute;left:27px;top:421px;width:938px;height:1px;background:#dadada"></div>
<div style="position:absolute;left:27px;top:447px;width:938px;height:1px;background:#dadada"></div>
<div style="position:absolute;left:27px;top:464px;width:938px;height:1px;background:#dadada"></div>
<div style="position:absolute;left:27px;top:481px;width:938px;height:1px;background:#dadada"></div>
<div style="position:absolute;left:27px;top:498px;width:938px;height:1px;background:#dadada"></div>
<div style="position:absolute;left:27px;top:515px;width:938px;height:1px;background:#dadada"></div>
<div style="position:absolute;left:27px;top:532px;width:938px;height:1px;background:#dadada"></div>
<div style="position:absolute;left:27px;top:549px;width:938px;height:1px;background:#dadada"></div>
<div style="position:absolute;left:27px;top:566px;width:938px;height:1px;background:#dadada"></div>
<div style="position:absolute;left:27px;top:583px;width:938px;height:1px;background:#dadada"></div>
<div style="position:absolute;left:27px;top:600px;width:938px;height:1px;background:#dadada"></div>
<div style="position:absolute;left:27px;top:617px;width:938px;height:1px;background:#dadada"></div>
<div style="position:absolute;left:964px;top:214px;width:1px;height:397px;background:#a6a6a6"></div>
<div style="position:absolute;left:27px;top:214px;width:929px;height:25px;background:#fff"></div>
<div style="position:absolute;left:27px;top:265px;width:929px;height:182px;background:#ffc0cb"></div>
<div style="position:absolute;left:955px;top:213px;width:1px;height:27px;background:#000"></div>
<div style="position:absolute;left:955px;top:265px;width:1px;height:182px;background:#000"></div>
<div style="position:absolute;left:26px;top:239px;width:930px;height:1px;background:#000"></div>
<div style="position:absolute;left:26px;top:265px;width:930px;height:1px;background:#000"></div>
<div style="position:absolute;left:26px;top:291px;width:930px;height:1px;background:#000"></div>
<div style="position:absolute;left:579px;top:317px;width:377px;height:1px;background:#000"></div>
<div style="position:absolute;left:134px;top:291px;width:1px;height:156px;background:#000"></div>
<div style="position:absolute;left:261px;top:291px;width:1px;height:156px;background:#000"></div>
<div style="position:absolute;left:422px;top:291px;width:1px;height:156px;background:#000"></div>
<div style="position:absolute;left:579px;top:291px;width:1px;height:156px;background:#000"></div>
<div style="position:absolute;left:719px;top:317px;width:1px;height:130px;background:#000"></div>
<div style="position:absolute;left:821px;top:317px;width:1px;height:130px;background:#000"></div>
<div style="position:absolute;left:26px;top:447px;width:930px;height:1px;background:#000"></div>
<div style="position:absolute;left:29.80px;top:219.15px;font-size:14px;line-height:14px;color:#000;font-weight:bold;font-family:'Liberation Sans', sans-serif;white-space:nowrap;transform:scaleX(0.9089);transform-origin:0 0;">DANH SÁCH HỒ SƠ CÁN BỘ</div>
<div style="position:absolute;left:438.20px;top:270.60px;font-size:16px;line-height:16px;color:#000;font-weight:bold;font-family:'Liberation Serif', serif;white-space:nowrap;transform:scaleX(0.9366);transform-origin:0 0;">Thông tin chung</div>
<div style="position:absolute;left:31.30px;top:361.60px;font-size:16px;line-height:16px;color:#000;font-weight:bold;font-family:'Liberation Serif', serif;white-space:nowrap;transform:scaleX(0.9626);transform-origin:0 0;">Loại cán bộ (*)</div>
<div style="position:absolute;left:139.10px;top:361.60px;font-size:16px;line-height:16px;color:#000;font-weight:bold;font-family:'Liberation Serif', serif;white-space:nowrap;transform:scaleX(0.9642);transform-origin:0 0;">Số hiệu cán bộ (*)</div>
<div style="position:absolute;left:298.20px;top:361.60px;font-size:16px;line-height:16px;color:#000;font-weight:bold;font-family:'Liberation Serif', serif;white-space:nowrap;transform:scaleX(0.9819);transform-origin:0 0;">Họ và tên (*)</div>
<div style="position:absolute;left:426.70px;top:361.60px;font-size:16px;line-height:16px;color:#000;font-weight:bold;font-family:'Liberation Serif', serif;white-space:nowrap;transform:scaleX(0.9687);transform-origin:0 0;">Ngày, tháng, năm sinh</div>
<div style="position:absolute;left:697.70px;top:296.60px;font-size:16px;line-height:16px;color:#000;font-weight:bold;font-family:'Liberation Serif', serif;white-space:nowrap;transform:scaleX(0.9394);transform-origin:0 0;">Thông tin tuyển dụng</div>
<div style="position:absolute;left:583.60px;top:374.90px;font-size:16px;line-height:16px;color:#000;font-weight:bold;font-family:'Liberation Serif', serif;white-space:nowrap;transform:scaleX(0.9829);transform-origin:0 0;">Ngày vào đơn vị (*)</div>
<div style="position:absolute;left:742.30px;top:374.80px;font-size:16px;line-height:16px;color:#000;font-weight:bold;font-family:'Liberation Serif', serif;white-space:nowrap;transform:scaleX(0.9539);transform-origin:0 0;">Chức vụ</div>
<div style="position:absolute;left:852.30px;top:374.80px;font-size:16px;line-height:16px;color:#000;font-weight:bold;font-family:'Liberation Serif', serif;white-space:nowrap;transform:scaleX(0.9401);transform-origin:0 0;">Chức danh</div>
<div style="position:absolute;left:29.00px;top:449.15px;font-size:14px;line-height:14px;color:#000;font-weight:normal;font-family:'Liberation Sans', sans-serif;white-space:nowrap;transform:scaleX(0.9178);transform-origin:0 0;">Công chức</div>
<div style="position:absolute;left:137.50px;top:449.15px;font-size:14px;line-height:14px;color:#000;font-weight:normal;font-family:'Liberation Sans', sans-serif;white-space:nowrap;transform:scaleX(0.8929);transform-origin:0 0;">SHCB00001</div>
<div style="position:absolute;left:263.90px;top:449.15px;font-size:14px;line-height:14px;color:#000;font-weight:normal;font-family:'Liberation Sans', sans-serif;white-space:nowrap;transform:scaleX(0.9129);transform-origin:0 0;">Nguyễn Hoàng Minh</div>
<div style="position:absolute;left:426.00px;top:449.15px;font-size:14px;line-height:14px;color:#000;font-weight:normal;font-family:'Liberation Sans', sans-serif;white-space:nowrap;transform:scaleX(0.8777);transform-origin:0 0;">13/10/1975</div>
<div style="position:absolute;left:666.60px;top:449.15px;font-size:14px;line-height:14px;color:#000;font-weight:normal;font-family:'Liberation Sans', sans-serif;white-space:nowrap;transform:scaleX(0.9096);transform-origin:0 0;">2/2/2015</div>
<div style="position:absolute;left:722.70px;top:449.15px;font-size:14px;line-height:14px;color:#000;font-weight:normal;font-family:'Liberation Sans', sans-serif;white-space:nowrap;transform:scaleX(0.8749);transform-origin:0 0;">Chuyên viên</div>
<div style="position:absolute;left:824.20px;top:449.15px;font-size:14px;line-height:14px;color:#000;font-weight:normal;font-family:'Liberation Sans', sans-serif;white-space:nowrap;transform:scaleX(0.9171);transform-origin:0 0;">Văn phòng Đảng ủy</div>
<div style="position:absolute;left:29.00px;top:466.15px;font-size:14px;line-height:14px;color:#000;font-weight:normal;font-family:'Liberation Sans', sans-serif;white-space:nowrap;transform:scaleX(0.9178);transform-origin:0 0;">Công chức</div>
<div style="position:absolute;left:137.50px;top:466.15px;font-size:14px;line-height:14px;color:#000;font-weight:normal;font-family:'Liberation Sans', sans-serif;white-space:nowrap;transform:scaleX(0.8929);transform-origin:0 0;">SHCB00002</div>
<div style="position:absolute;left:263.90px;top:466.15px;font-size:14px;line-height:14px;color:#000;font-weight:normal;font-family:'Liberation Sans', sans-serif;white-space:nowrap;transform:scaleX(0.9258);transform-origin:0 0;">Chu Minh An</div>
<div style="position:absolute;left:426.00px;top:466.15px;font-size:14px;line-height:14px;color:#000;font-weight:normal;font-family:'Liberation Sans', sans-serif;white-space:nowrap;transform:scaleX(0.8848);transform-origin:0 0;">25/06/1982</div>
<div style="position:absolute;left:666.60px;top:466.15px;font-size:14px;line-height:14px;color:#000;font-weight:normal;font-family:'Liberation Sans', sans-serif;white-space:nowrap;transform:scaleX(0.9096);transform-origin:0 0;">2/2/2015</div>
<div style="position:absolute;left:722.70px;top:466.15px;font-size:14px;line-height:14px;color:#000;font-weight:normal;font-family:'Liberation Sans', sans-serif;white-space:nowrap;transform:scaleX(0.8749);transform-origin:0 0;">Chuyên viên</div>
<div style="position:absolute;left:824.20px;top:466.15px;font-size:14px;line-height:14px;color:#000;font-weight:normal;font-family:'Liberation Sans', sans-serif;white-space:nowrap;transform:scaleX(0.9171);transform-origin:0 0;">Văn phòng Đảng ủy</div>
<div style="position:absolute;left:29.00px;top:483.15px;font-size:14px;line-height:14px;color:#000;font-weight:normal;font-family:'Liberation Sans', sans-serif;white-space:nowrap;transform:scaleX(0.9178);transform-origin:0 0;">Công chức</div>
<div style="position:absolute;left:137.50px;top:483.15px;font-size:14px;line-height:14px;color:#000;font-weight:normal;font-family:'Liberation Sans', sans-serif;white-space:nowrap;transform:scaleX(0.8929);transform-origin:0 0;">SHCB00003</div>
<div style="position:absolute;left:264.40px;top:483.15px;font-size:14px;line-height:14px;color:#000;font-weight:normal;font-family:'Liberation Sans', sans-serif;white-space:nowrap;transform:scaleX(0.8938);transform-origin:0 0;">Hà Thu Hồng</div>
<div style="position:absolute;left:426.00px;top:483.15px;font-size:14px;line-height:14px;color:#000;font-weight:normal;font-family:'Liberation Sans', sans-serif;white-space:nowrap;transform:scaleX(0.8848);transform-origin:0 0;">14/01/1985</div>
<div style="position:absolute;left:666.60px;top:483.15px;font-size:14px;line-height:14px;color:#000;font-weight:normal;font-family:'Liberation Sans', sans-serif;white-space:nowrap;transform:scaleX(0.9096);transform-origin:0 0;">2/2/2015</div>
<div style="position:absolute;left:722.70px;top:483.15px;font-size:14px;line-height:14px;color:#000;font-weight:normal;font-family:'Liberation Sans', sans-serif;white-space:nowrap;transform:scaleX(0.8749);transform-origin:0 0;">Chuyên viên</div>
<div style="position:absolute;left:824.20px;top:483.15px;font-size:14px;line-height:14px;color:#000;font-weight:normal;font-family:'Liberation Sans', sans-serif;white-space:nowrap;transform:scaleX(0.9171);transform-origin:0 0;">Văn phòng Đảng ủy</div>
<div style="position:absolute;left:29.00px;top:500.15px;font-size:14px;line-height:14px;color:#000;font-weight:normal;font-family:'Liberation Sans', sans-serif;white-space:nowrap;transform:scaleX(0.9178);transform-origin:0 0;">Công chức</div>
<div style="position:absolute;left:137.50px;top:500.15px;font-size:14px;line-height:14px;color:#000;font-weight:normal;font-family:'Liberation Sans', sans-serif;white-space:nowrap;transform:scaleX(0.8929);transform-origin:0 0;">SHCB00004</div>
<div style="position:absolute;left:263.90px;top:500.15px;font-size:14px;line-height:14px;color:#000;font-weight:normal;font-family:'Liberation Sans', sans-serif;white-space:nowrap;transform:scaleX(0.9054);transform-origin:0 0;">Nguyễn Thu Hà</div>
<div style="position:absolute;left:426.00px;top:500.15px;font-size:14px;line-height:14px;color:#000;font-weight:normal;font-family:'Liberation Sans', sans-serif;white-space:nowrap;transform:scaleX(0.8821);transform-origin:0 0;">2/5/1984</div>
<div style="position:absolute;left:666.60px;top:500.15px;font-size:14px;line-height:14px;color:#000;font-weight:normal;font-family:'Liberation Sans', sans-serif;white-space:nowrap;transform:scaleX(0.9096);transform-origin:0 0;">2/2/2015</div>
<div style="position:absolute;left:722.70px;top:500.15px;font-size:14px;line-height:14px;color:#000;font-weight:normal;font-family:'Liberation Sans', sans-serif;white-space:nowrap;transform:scaleX(0.8749);transform-origin:0 0;">Chuyên viên</div>
<div style="position:absolute;left:824.20px;top:500.15px;font-size:14px;line-height:14px;color:#000;font-weight:normal;font-family:'Liberation Sans', sans-serif;white-space:nowrap;transform:scaleX(0.9171);transform-origin:0 0;">Văn phòng Đảng ủy</div>
<div style="position:absolute;left:820px;top:497px;width:136px;height:2px;background:#217346"></div>
<div style="position:absolute;left:820px;top:515px;width:133px;height:2px;background:#217346"></div>
<div style="position:absolute;left:820px;top:497px;width:2px;height:20px;background:#217346"></div>
<div style="position:absolute;left:955px;top:497px;width:1px;height:17px;background:#217346"></div>
<div style="position:absolute;left:956px;top:497px;width:1px;height:2px;background:#217346"></div>
<div style="position:absolute;left:953px;top:513px;width:5px;height:5px;background:#217346"></div>
<div style="position:absolute;left:956px;top:499px;width:8px;height:17px;background:#f3f4f6;border:1px solid #c8c8c8;border-right:none;box-sizing:border-box"></div>
<div style="position:absolute;left:956px;top:499px;width:8px;height:17px;overflow:hidden"><svg style="position:absolute;left:5px;top:6px" width="6" height="4"><polygon points="0,0 6,0 3,3.5" fill="#888"/></svg></div>
<svg style="position:absolute;left:923px;top:517px" width="20" height="20" viewBox="0 0 20 20"><rect x="0.5" y="0.5" width="19" height="19" fill="#fff" stroke="#a6a6a6"/><rect x="3.5" y="3.5" width="6" height="4" fill="#3d7bff"/><path d="M3.5 3.5 H15.5 V7.5 H3.5 Z M3.5 7.5 V11.5 H9.5 V7.5" fill="none" stroke="#8a8a8a"/><path d="M3 15.5 H4 M5 15.5 H6 M7 15.5 H8 M9 15.5 H10 M3 13.5 H4 M9 13.5 H10" stroke="#999"/><path d="M12 13.5 H17 M14.5 11 V16" stroke="#999"/></svg>
<div style="position:absolute;left:968px;top:199px;width:15px;height:15px;background:#fff;border:1px solid #c6c6c6;box-sizing:border-box"></div>
<svg style="position:absolute;left:971px;top:204px" width="9" height="5"><polygon points="0,5 9,5 4.5,0" fill="#777"/></svg>
<div style="position:absolute;left:968px;top:214px;width:15px;height:363px;background:#fff;border:1px solid #c6c6c6;box-sizing:border-box"></div>
<div style="position:absolute;left:968px;top:577px;width:15px;height:20px;background:#dadada"></div>
<div style="position:absolute;left:968px;top:597px;width:15px;height:14px;background:#fff;border:1px solid #c6c6c6;box-sizing:border-box"></div>
<svg style="position:absolute;left:971px;top:602px" width="9" height="5"><polygon points="0,0 9,0 4.5,5" fill="#777"/></svg>
<div style="position:absolute;left:1px;top:611px;width:985px;height:28px;background:#e6e6e6"></div>
<div style="position:absolute;left:1px;top:611px;width:964px;height:1px;background:#9b9b9b"></div>
<div style="position:absolute;left:101px;top:611px;width:61px;height:24px;background:#fff;border-left:1px solid #9b9b9b;border-right:1px solid #9b9b9b;box-sizing:border-box"></div>
<div style="position:absolute;left:101px;top:634px;width:61px;height:2px;background:#217346"></div>
<svg style="position:absolute;left:29px;top:620px" width="5" height="9"><polygon points="5,0 5,9 0,4.5" fill="#bbb"/></svg>
<svg style="position:absolute;left:57px;top:620px" width="5" height="9"><polygon points="0,0 0,9 5,4.5" fill="#bbb"/></svg>
<div style="position:absolute;left:114.00px;top:618.00px;font-size:13px;line-height:13px;color:#217346;font-weight:bold;font-family:'Liberation Sans', sans-serif;white-space:nowrap;transform:scaleX(0.9602);transform-origin:0 0;">Ho so</div>
<div style="position:absolute;left:175.50px;top:618.00px;font-size:13px;line-height:13px;color:#444;font-weight:normal;font-family:'Liberation Sans', sans-serif;white-space:nowrap;transform:scaleX(1.0260);transform-origin:0 0;">Ho so tiep theo</div>
<div style="position:absolute;left:280px;top:616px;width:1px;height:18px;background:#aaa"></div>
<svg style="position:absolute;left:313px;top:616px" width="18" height="18" viewBox="0 0 18 18"><circle cx="9" cy="8.5" r="7.5" fill="none" stroke="#777" stroke-width="1.2"/><path d="M9 4.5 V12.5 M5 8.5 H13" stroke="#777" stroke-width="1.6"/></svg>
<div style="position:absolute;left:592px;top:620px;width:2px;height:2px;background:#aaa"></div>
<div style="position:absolute;left:592px;top:624px;width:2px;height:2px;background:#aaa"></div>
<div style="position:absolute;left:592px;top:628px;width:2px;height:2px;background:#aaa"></div>
<div style="position:absolute;left:609px;top:618px;width:16px;height:15px;background:#fff;border:1px solid #b0b0b0;box-sizing:border-box"></div>
<svg style="position:absolute;left:614px;top:622px" width="5" height="7"><polygon points="5,0 5,7 0,3.5" fill="#666"/></svg>
<div style="position:absolute;left:624px;top:618px;width:285px;height:15px;background:#fff;border:2px solid #b0b0b0;border-top-width:1px;border-bottom-width:1px;box-sizing:border-box"></div>
<div style="position:absolute;left:909px;top:618px;width:41px;height:15px;background:#d9d9d9"></div>
<div style="position:absolute;left:950px;top:618px;width:15px;height:15px;background:#fff;border:1px solid #b0b0b0;box-sizing:border-box"></div>
<svg style="position:absolute;left:956px;top:622px" width="5" height="7"><polygon points="0,0 0,7 5,3.5" fill="#666"/></svg>
<div style="position:absolute;left:1px;top:639px;width:985px;height:22px;background:#f1f1f1"></div>
<div style="position:absolute;left:1px;top:639px;width:985px;height:1px;background:#c6c6c6"></div>
<div style="position:absolute;left:8.60px;top:644.42px;font-size:12.5px;line-height:12.5px;color:#444;font-weight:normal;font-family:'Liberation Sans', sans-serif;white-space:nowrap;transform:scaleX(0.8415);transform-origin:0 0;">Ready</div>
<div style="position:absolute;left:683px;top:640px;width:38px;height:21px;background:#c8c8c8"></div>
<svg style="position:absolute;left:694px;top:642px" width="15" height="15" viewBox="0 0 15 15"><path d="M1.5 1.5 H13.5 V13.5 H1.5 Z M1.5 5.5 H13.5 M1.5 9.5 H13.5 M5.5 1.5 V13.5 M9.5 1.5 V13.5" fill="none" stroke="#666" stroke-width="1.6"/></svg>
<svg style="position:absolute;left:732px;top:642px" width="16" height="15" viewBox="0 0 16 15"><rect x="1.5" y="1.5" width="13" height="13" fill="none" stroke="#666" stroke-width="1.3"/><rect x="4.5" y="4.5" width="7" height="7" fill="none" stroke="#666"/><path d="M6 6.5 H10 M6 8 H10 M6 9.5 H10" stroke="#666" stroke-width="0.8"/></svg>
<svg style="position:absolute;left:770px;top:642px" width="16" height="15" viewBox="0 0 16 15"><path d="M1.5 1.5 H14.5 V14.5 H1.5 Z M1.5 9.5 H9.5 V1.5 M5.5 1.5 V9.5" fill="none" stroke="#666" stroke-width="1.3"/></svg>
<div style="position:absolute;left:802px;top:649px;width:6px;height:2px;background:#444"></div>
<div style="position:absolute;left:812px;top:649px;width:100px;height:1px;background:#999"></div>
<div style="position:absolute;left:860px;top:644px;width:4px;height:11px;background:#555"></div>
<div style="position:absolute;left:916px;top:649px;width:8px;height:2px;background:#444"></div>
<div style="position:absolute;left:919px;top:646px;width:2px;height:8px;background:#444"></div>
<div style="position:absolute;left:939.60px;top:643.42px;font-size:12.5px;line-height:12.5px;color:#444;font-weight:normal;font-family:'Liberation Sans', sans-serif;white-space:nowrap;transform:scaleX(0.8250);transform-origin:0 0;">100%</div>
</body></html>
